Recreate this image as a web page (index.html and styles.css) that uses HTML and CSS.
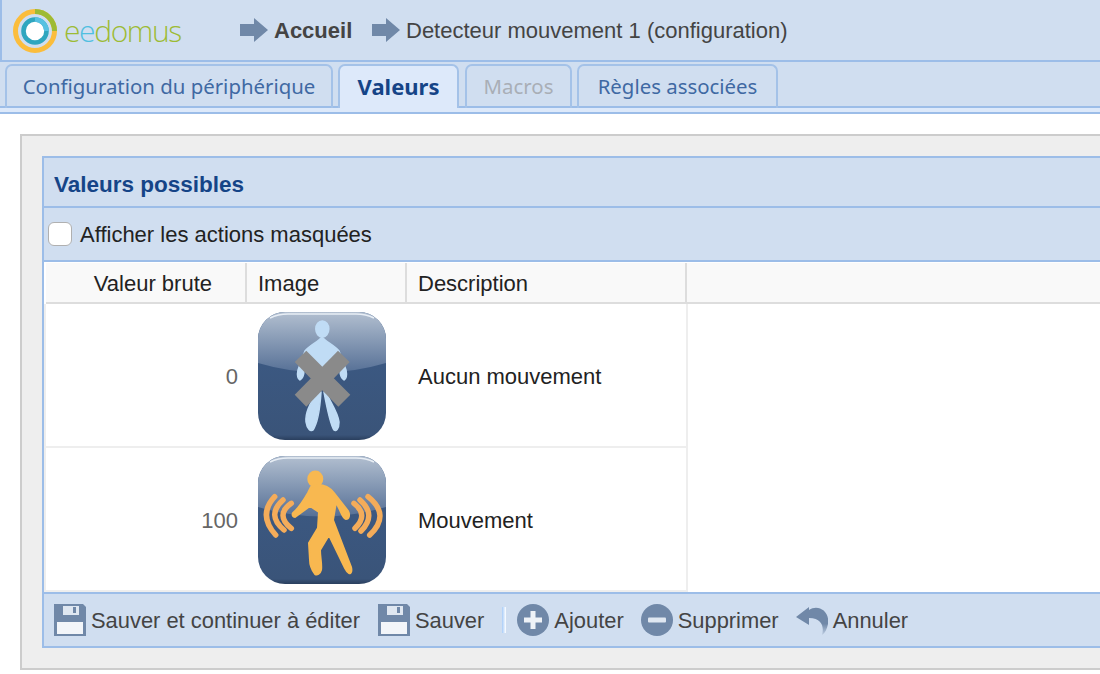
FILE: index.html
```html
<!DOCTYPE html>
<html lang="fr">
<head>
<meta charset="utf-8">
<title>eedomus</title>
<link rel="stylesheet" href="styles.css">
</head>
<body>
<svg class="defs" width="0" height="0" aria-hidden="true">
  <defs>
    <linearGradient id="gloss" x1="0" y1="0" x2="0" y2="1">
      <stop offset="0" stop-color="#b2bfd0"/>
      <stop offset="1" stop-color="#567096"/>
    </linearGradient>
    <linearGradient id="base" x1="0" y1="0" x2="0" y2="1">
      <stop offset="0" stop-color="#3c5b87"/>
      <stop offset=".96" stop-color="#3a5479"/>
      <stop offset="1" stop-color="#2a3f5e"/>
    </linearGradient>
    <linearGradient id="undo-fade" x1="0" y1="0" x2="0" y2="1">
      <stop offset=".6" stop-color="#7088a8"/>
      <stop offset="1" stop-color="#7088a8" stop-opacity=".2"/>
    </linearGradient>
    <symbol id="tile" viewBox="0 0 128 128">
      <rect width="128" height="128" rx="27" fill="url(#base)"/>
      <path d="M0 27A27 27 0 0 1 27 0H101A27 27 0 0 1 128 27V51Q64 70 0 51Z" fill="url(#gloss)"/>
      <path d="M12 6Q20 2 30 2H98Q108 2 116 6" fill="none" stroke="#e8eef5" stroke-width="1.500"/>
    </symbol>
    <symbol id="floppy" viewBox="0 0 32 32">
      <path d="M0 0H29L32 3V32H0Z" fill="#7088a8"/>
      <rect x="9" y="2" width="16" height="9" fill="#dfe7f1"/>
      <rect x="19" y="3" width="3" height="6" fill="#7088a8"/>
      <rect x="3" y="18" width="26" height="12" fill="#f2f5f9"/>
    </symbol>
    <symbol id="arrow" viewBox="0 0 28 24">
      <path d="M0 6H14V0L28 12L14 24V18H0Z" fill="#7088a8"/>
    </symbol>
  </defs>
</svg>

<header class="topbar">
  <svg class="logo-mark" viewBox="0 0 44 44" width="44" height="44" aria-hidden="true">
    <circle cx="22" cy="22" r="19.500" fill="none" stroke="#fbbd3c" stroke-width="5"/>
    <path d="M22 2.500A19.500 19.500 0 0 1 41.500 22" fill="none" stroke="#9dbb34" stroke-width="5"/>
    <circle cx="22" cy="22" r="11.500" fill="#fff" stroke="#2fa6bf" stroke-width="4.600"/>
    <path d="M22 10.500A11.500 11.500 0 0 1 33.500 22" fill="none" stroke="#56c1e2" stroke-width="4.600"/>
  </svg>
  <span class="logo-text">e<span class="logo-blue">e</span>domus</span>
  <nav class="crumbs">
    <svg class="crumb-arrow"><use href="#arrow"/></svg>
    <span class="crumb crumb-home">Accueil</span>
    <svg class="crumb-arrow crumb-arrow-next"><use href="#arrow"/></svg>
    <span class="crumb">Detecteur mouvement 1 (configuration)</span>
  </nav>
</header>

<div class="tabbar">
  <div class="tabs">
    <span class="tab tab-config">Configuration du périphérique</span>
    <span class="tab tab-active">Valeurs</span>
    <span class="tab tab-muted">Macros</span>
    <span class="tab tab-rules">Règles associées</span>
  </div>
  <div class="tabstrip"></div>
</div>

<main class="panel">
  <section class="box">
    <h2 class="box-title">Valeurs possibles</h2>
    <label class="filter"><span class="check"></span><span class="filter-text">Afficher les actions masquées</span></label>
    <div class="grid-head">
      <span class="th th-raw">Valeur brute</span>
      <span class="th th-img">Image</span>
      <span class="th th-desc">Description</span>
      <span class="th th-rest"></span>
    </div>
    <div class="row">
      <span class="cell-raw">0</span>
      <span class="cell-img">
        <svg class="value-icon" viewBox="0 0 128 128" aria-hidden="true">
          <use href="#tile"/>
          <g fill="#c0dcf5" stroke="#c0dcf5" stroke-width="1.500" stroke-linejoin="round">
            <ellipse cx="64.300" cy="17" rx="6.500" ry="8"/>
            <path d="M64 25C60 30 52 33 47 39L40 58C39 63 40 67 42 68C45 66 46 62 46 58L82 58C82 62 83 66 86 68C88 67 89 63 88 58L81 39C76 33 68 30 64 25Z"/>
            <path d="M60 80C54 88 47 100 48 110C49 117 53 120 55 118C59 112 62 96 63 80Z"/>
            <path d="M68 80C71 88 80 100 81 110C81 117 78 120 76 118C72 112 69 96 66 80Z"/>
          </g>
          <g fill="#8a8a8a">
            <path d="M36.700 50L48.300 38.700L92.300 82.700L80.300 94.700Z"/>
            <path d="M91.700 50L80 38.700L36.700 82.700L48.300 94.700Z"/>
          </g>
        </svg>
      </span>
      <span class="cell-desc">Aucun mouvement</span>
    </div>
    <div class="row">
      <span class="cell-raw">100</span>
      <span class="cell-img">
        <svg class="value-icon" viewBox="0 0 128 128" aria-hidden="true">
          <use href="#tile"/>
          <ellipse cx="57.300" cy="23" rx="8" ry="8.500" fill="#f8b850"/>
          <path fill="#f8b850" stroke="#f8b850" stroke-width="2" stroke-linejoin="round" d="M53 31L60 29C66 29 72 32 76 37L90 55C92 59 91 63 88 63C85 62 84 58 82 54L78 46L75 64L93 111C94 115 93 118 91 117C89 116 88 114 87 112L71 79L62 94C62 102 64 108 63 114C62 118 59 119 57 118C54 114 52 108 52 104L51 87L60 72L61 56L52 50L37 61C35 61 34 59 35 57C41 52 46 44 50 37Z"/>
          <g fill="none" stroke="#f4ac5a" stroke-width="5.500" stroke-linecap="round">
            <path d="M16.700 40.700Q-.4 59 17.700 79"/>
            <path d="M25 44Q8 59 26 74"/>
            <path d="M33.300 47.300Q16.700 59 33.300 72.300"/>
            <path d="M110 40.700Q133 59 111.700 79"/>
            <path d="M102 44Q119 59 103 75"/>
            <path d="M96 47.300Q111 59 97 72.300"/>
          </g>
        </svg>
      </span>
      <span class="cell-desc">Mouvement</span>
    </div>
    <div class="toolbar">
      <span class="action action-first"><svg class="tool"><use href="#floppy"/></svg><span class="action-text">Sauver et continuer à éditer</span></span>
      <span class="action"><svg class="tool"><use href="#floppy"/></svg><span class="action-text">Sauver</span></span>
      <span class="sep"></span>
      <span class="action"><svg class="tool" viewBox="0 0 32 32"><circle cx="16" cy="16" r="16" fill="#7088a8"/><path d="M13.500 7h5v6.500H25v5h-6.500V25h-5v-6.500H7v-5h6.500Z" fill="#eef2f7"/></svg><span class="action-text">Ajouter</span></span>
      <span class="action"><svg class="tool" viewBox="0 0 32 32"><circle cx="16" cy="16" r="16" fill="#7088a8"/><rect x="7" y="13.500" width="18" height="5" rx="1" fill="#dfe7f1"/></svg><span class="action-text">Supprimer</span></span>
      <span class="action"><svg class="tool" viewBox="0 0 32 32"><path d="M0 13L13 3V6C22 0 34 7 32 20C31 25 29 29 26 31C28 24 27 14 13 14V21Z" fill="url(#undo-fade)"/></svg><span class="action-text">Annuler</span></span>
    </div>
  </section>
</main>
</body>
</html>
```

FILE: styles.css
```css
* { box-sizing: border-box; }
html, body { margin: 0; height: 674px; overflow: hidden; background: #fff; }
body { width: 1100px; font-family: "Liberation Sans", Arial, sans-serif; font-size: 22px; color: #444; }
.defs { position: absolute; }

.topbar {
  height: 62px; display: flex; align-items: center; background: #d0def0;
  border-left: 2px solid #9cbde8; border-bottom: 2px solid #9cbde8; padding: 0 0 0 11px;
}
.logo-mark { flex: none; margin-top: 1px; }
.logo-text { margin-left: 7px; font-family: "Open Sans", sans-serif; font-weight: 300; font-size: 30px; letter-spacing: -1.400px; color: #9dbb34; width: 119px; }
.logo-blue { color: #4fbfe0; }
.crumbs { display: flex; align-items: center; margin-left: 57px; }
.crumb-arrow { width: 28px; height: 24px; }
.crumb { margin-left: 6px; padding-top: 1px; }
.crumb-home { font-weight: 700; width: 78px; }
.crumb-arrow-next { margin-left: 20px; }

.tabbar { height: 52px; background: #d0def0; border-bottom: 2px solid #9cbde8; display: flex; flex-direction: column; }
.tabs { height: 46px; display: flex; padding: 2px 0 0 5px; gap: 5px; border-bottom: 2px solid #9cbde8; }
.tab {
  height: 44px; display: flex; align-items: center; justify-content: center; padding-bottom: 2px;
  font-family: "Noto Sans", sans-serif; font-size: 20.400px; color: #3f69a3;
  border: 2px solid #a4c2e8; border-bottom: 0; border-radius: 7px 7px 0 0; flex: none;
}
.tab-config { width: 328px; }
.tab-active { width: 121px; background: #dde9fa; color: #154487; font-weight: 700; font-size: 22px; position: relative; z-index: 1; }
.tab-muted { width: 107px; margin-left: 1px; color: #a9aeb6; }
.tab-rules { width: 201px; }
.tabstrip { height: 4px; background: #dde9fa; }

.panel { margin: 20px 0 0 20px; width: 1200px; height: 536px; background: #eee; border: 2px solid #ccc; padding: 20px; }
.box { height: 492px; border: 2px solid #9cbde8; background: #fff; display: flex; flex-direction: column; }
.box-title { margin: 0; height: 50px; padding: 5px 0 0 10px; display: flex; align-items: center; background: #d0def0; border-bottom: 2px solid #9cbde8; color: #154487; font-size: 22.500px; font-weight: 700; }
.filter { height: 54px; display: flex; align-items: center; padding-left: 4px; background: #d0def0; border-bottom: 2px solid #9cbde8; color: #222; }
.filter-text { padding-top: 1px; }
.check { width: 24px; height: 24px; margin-right: 8px; border-radius: 6px; background: #fff; border: 1px solid #b0b0b0; }

.grid-head { height: 41px; margin: 1px 0 0 2px; display: flex; background: #f9f9f9; border-bottom: 2px solid #ddd; color: #222; flex: none; }
.th { display: flex; align-items: center; padding-top: 3px; border-right: 2px solid #ddd; }
.th-raw { width: 201px; justify-content: flex-end; padding-right: 33px; }
.th-img { width: 160px; padding-left: 11px; }
.th-desc { width: 280px; padding-left: 11px; }
.th-rest { flex: 1; border-right: 0; }

.row { width: 644px; height: 144px; flex: none; padding-top: 2px; display: flex; align-items: center; border-bottom: 2px solid #eee; border-right: 2px solid #eee; border-left: 2px solid #eee; }
.cell-raw { width: 192px; padding-top: 1px; text-align: right; color: #666; }
.cell-img { width: 180px; padding-left: 20px; display: flex; }
.cell-desc { padding-top: 1px; color: #222; }
.value-icon { width: 128px; height: 128px; display: block; }

.toolbar { height: 54px; display: flex; align-items: center; padding-left: 10px; background: #d0def0; border-top: 2px solid #9cbde8; }
.action { display: flex; align-items: center; margin-left: 17px; }
.action-first { margin-left: 0; margin-right: 1px; }
.action-text { font-size: 21.900px; padding-top: 1px; }
.tool { width: 32px; height: 32px; margin-right: 5px; flex: none; }
.sep { width: 4px; height: 26px; margin-left: 18px; margin-right: -6px; background: linear-gradient(90deg, #a8ccf8, #fff); }
```
